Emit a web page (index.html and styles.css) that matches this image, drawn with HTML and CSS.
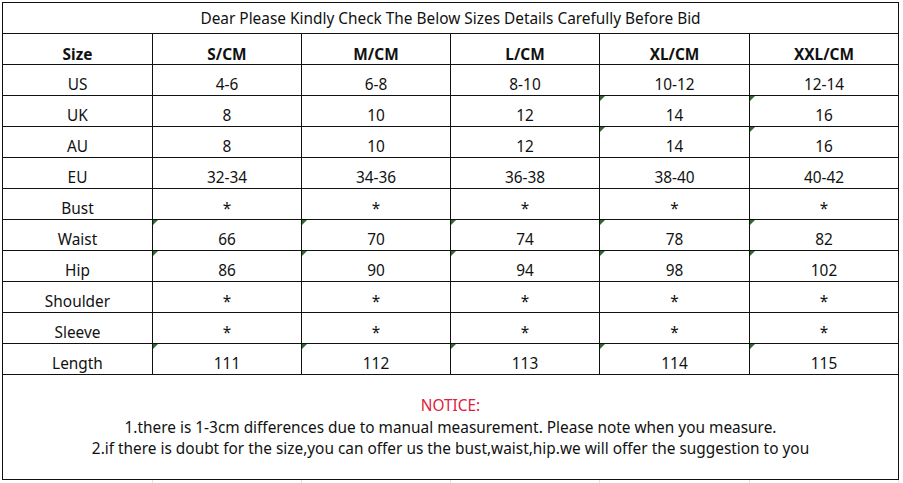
FILE: index.html
```html
<!DOCTYPE html>
<html>
<head>
<meta charset="utf-8">
<link rel="stylesheet" href="styles.css">
</head>
<body>
<div class="sheet">
  <div class="title">Dear Please Kindly Check The Below Sizes Details Carefully Before Bid</div>

  <div class="c hd">Size</div><div class="c hd">S/CM</div><div class="c hd">M/CM</div><div class="c hd">L/CM</div><div class="c hd">XL/CM</div><div class="c hd">XXL/CM</div>

  <div class="c">US</div><div class="c">4-6</div><div class="c">6-8</div><div class="c">8-10</div><div class="c">10-12</div><div class="c">12-14</div>

  <div class="c">UK</div><div class="c">8</div><div class="c">10</div><div class="c">12</div><div class="c tx">14</div><div class="c tx">16</div>

  <div class="c">AU</div><div class="c">8</div><div class="c">10</div><div class="c">12</div><div class="c tx">14</div><div class="c tx">16</div>

  <div class="c">EU</div><div class="c">32-34</div><div class="c">34-36</div><div class="c">36-38</div><div class="c">38-40</div><div class="c">40-42</div>

  <div class="c">Bust</div><div class="c">*</div><div class="c">*</div><div class="c">*</div><div class="c">*</div><div class="c">*</div>

  <div class="c">Waist</div><div class="c tx">66</div><div class="c tx">70</div><div class="c tx">74</div><div class="c tx">78</div><div class="c tx">82</div>

  <div class="c">Hip</div><div class="c tx">86</div><div class="c tx">90</div><div class="c tx">94</div><div class="c tx">98</div><div class="c tx">102</div>

  <div class="c">Shoulder</div><div class="c">*</div><div class="c">*</div><div class="c">*</div><div class="c">*</div><div class="c">*</div>

  <div class="c">Sleeve</div><div class="c">*</div><div class="c">*</div><div class="c">*</div><div class="c">*</div><div class="c">*</div>

  <div class="c">Length</div><div class="c tx">111</div><div class="c tx">112</div><div class="c tx">113</div><div class="c tx">114</div><div class="c tx">115</div>

  <div class="notice">
    <div class="notice-head">NOTICE:</div>
    <div>1.there is 1-3cm differences due to manual measurement. Please note when you measure.</div>
    <div>2.if there is doubt for the size,you can offer us the bust,waist,hip.we will offer the suggestion to you</div>
  </div>
</div>
<div class="tail">
  <span></span><span></span><span></span><span></span><span></span><span></span>
</div>
</body>
</html>
```

FILE: styles.css
```css
html, body {
  margin: 0;
  padding: 0;
  background: #ffffff;
}

body {
  padding: 2px 0 0 2px;
  font-family: "Noto Sans", "Open Sans", sans-serif;
  color: #111111;
  font-size: 15.4px;
}

.sheet {
  display: grid;
  grid-template-columns: 150px 149px 149px 149px 150px 149px;
  grid-template-rows: repeat(12, 31px) 105px;
  width: 896px;
  border-left: 1px solid #111;
  border-top: 1px solid #111;
}

.title,
.c,
.notice {
  box-sizing: border-box;
  border-right: 1px solid #111;
  border-bottom: 1px solid #111;
}

.title {
  grid-column: 1 / -1;
  text-align: center;
  line-height: 20px;
  padding-top: 6px;
}

.c {
  position: relative;
  text-align: center;
  line-height: 20px;
  padding-top: 10px;
}

.hd {
  font-weight: 700;
  padding-top: 11px;
}

.tx::before {
  content: "";
  position: absolute;
  left: 0;
  top: 0;
  width: 0;
  height: 0;
  border-top: 5px solid #2f6b2f;
  border-right: 5px solid transparent;
}

.notice {
  grid-column: 1 / -1;
  display: flex;
  flex-direction: column;
  justify-content: center;
  align-items: center;
  line-height: 21.5px;
  padding-top: 1px;
}

.notice-head {
  color: #e0203a;
}

.tail {
  display: flex;
  margin-left: 1px;
  height: 6px;
}

.tail span {
  box-sizing: border-box;
  width: 149px;
  border-right: 1px solid #e2e2e2;
}

.tail span:first-child,
.tail span:nth-child(5) {
  width: 150px;
}
```
